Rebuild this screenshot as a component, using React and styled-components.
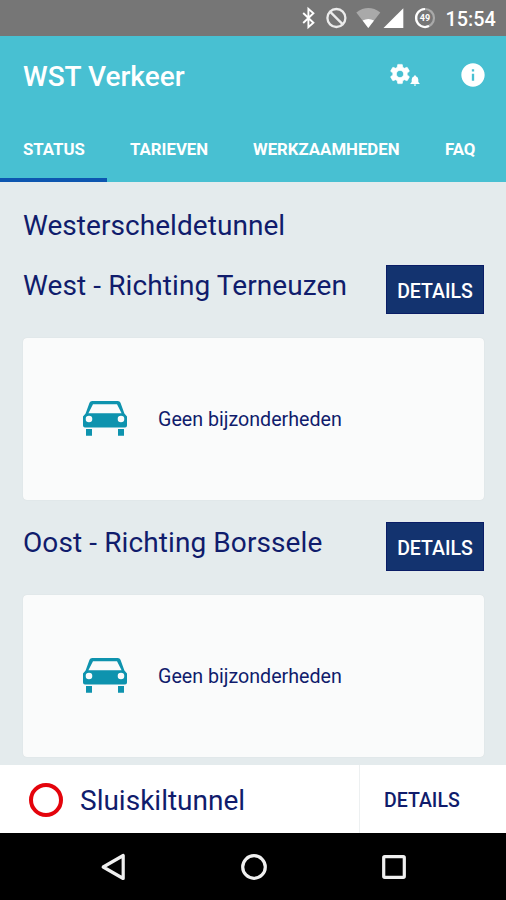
import React, { useState } from 'react'
import styled, { createGlobalStyle } from 'styled-components'
import { MdInfo, MdSettings } from 'react-icons/md'

const tabs = [
    { id: 1, title: 'STATUS', width: 107 },
    { id: 2, title: 'TARIEVEN', width: 123 },
    { id: 3, title: 'WERKZAAMHEDEN', width: 192 },
    { id: 4, title: 'FAQ', width: 84 },
]

const directions = [
    { id: 1, title: 'West - Richting Terneuzen', message: 'Geen bijzonderheden' },
    { id: 2, title: 'Oost - Richting Borssele', message: 'Geen bijzonderheden' },
]

function StatusIcons() {
    return (
        <svg width="136" height="36" viewBox="302 0 136 36">
            <path
                d="M303.2 13L313.4 22.8L308.4 27.2V8.8L313.4 13.2L303.2 23"
                fill="none"
                stroke="#fff"
                strokeWidth="1.9"
            />
            <g fill="none" stroke="#ececec" strokeWidth="2.3">
                <circle cx="336.4" cy="18" r="9" />
                <path d="M330 11.6L342.8 24.4" />
            </g>
            <path d="M356.3 12.4Q368.3 3.8 380.3 12.4L368.3 28Z" fill="#a9a9a9" />
            <path d="M362.6 20.6Q368.3 17.6 374 20.6L368.3 28Z" fill="#fff" />
            <path d="M403.3 8.3V28H383.5Z" fill="#fff" />
            <circle cx="425" cy="18" r="9" fill="none" stroke="#a9a9a9" strokeWidth="2.2" />
            <path d="M425 9A9 9 0 1 0 429 26.1" fill="none" stroke="#fff" strokeWidth="2.2" />
            <text x="425" y="21.4" fill="#fff" fontFamily="Roboto, sans-serif" fontSize="9" fontWeight="700" textAnchor="middle">49</text>
        </svg>
    )
}

function Bell() {
    return (
        <svg width="10" height="11" viewBox="0 0 10 11" fill="#fff">
            <path d="M5 0.2Q5.9 0.2 5.9 1.2Q8.3 2 8.3 4.6V7L9.6 8.4V9H0.4V8.4L1.7 7V4.6Q1.7 2 4.1 1.2Q4.1 0.2 5 0.2ZM3.8 9.5H6.2Q6.2 10.7 5 10.7Q3.8 10.7 3.8 9.5Z" />
        </svg>
    )
}

function Car() {
    return (
        <svg width="46" height="36" viewBox="0 0 46 36" fill="#0e93ae">
            <path
                fillRule="evenodd"
                d="M10.2 0H35.8Q37.8 0 38.5 1.8L42.4 12.4L45 15.5V24.5Q45 26.5 43 26.5H3Q1 26.5 1 24.5V15.5L3.6 12.4L7.5 1.8Q8.2 0 10.2 0ZM11 3.2L6.4 12.2H39.6L35 3.2ZM7 14.7A3.3 3.3 0 1 0 7 21.3A3.3 3.3 0 1 0 7 14.7ZM39 14.7A3.3 3.3 0 1 0 39 21.3A3.3 3.3 0 1 0 39 14.7Z"
            />
            <path d="M4 28H10V34.8H4ZM36 28H42V34.8H36Z" />
        </svg>
    )
}

function App() {
    const [active, setActive] = useState(1)

    return (
        <Screen>
            <GlobalStyle />
            <StatusBar>
                <StatusIcons />
                <Clock>15:54</Clock>
            </StatusBar>
            <Header>
                <Toolbar>
                    <Title>WST Verkeer</Title>
                    <Settings>
                        <MdSettings size={24} />
                        <Bell />
                    </Settings>
                    <MdInfo size={28} />
                </Toolbar>
                <Tabs>
                    {tabs.map((tab) => {
                        return <Tab
                            key={tab.id}
                            $active={active === tab.id}
                            $width={tab.width}
                            onClick={() => setActive(tab.id)}
                        >
                            {tab.title}
                        </Tab>
                    })}
                </Tabs>
            </Header>
            <Content>
                <Heading>Westerscheldetunnel</Heading>
                {directions.map((item) => {
                    return <Direction key={item.id}>
                        <DirectionHead>
                            <Heading $spacing="0.1px">{item.title}</Heading>
                            <DetailsButton>DETAILS</DetailsButton>
                        </DirectionHead>
                        <Card>
                            <Car />
                            <span>{item.message}</span>
                        </Card>
                    </Direction>
                })}
            </Content>
            <Footer>
                <FooterTitle>
                    <Ring />
                    <Heading>Sluiskiltunnel</Heading>
                </FooterTitle>
                <FooterDetails>DETAILS</FooterDetails>
            </Footer>
            <NavBar>
                <svg width="26" height="30" viewBox="0 0 26 30">
                    <path d="M3.2 15L23.2 3.5V26.5Z" />
                </svg>
                <svg width="28" height="28" viewBox="0 0 28 28">
                    <circle cx="14" cy="14" r="11.3" />
                </svg>
                <svg width="26" height="26" viewBox="0 0 26 26">
                    <rect x="2.7" y="2.7" width="20.6" height="20.6" rx="1" />
                </svg>
            </NavBar>
        </Screen>
    )
}

const GlobalStyle = createGlobalStyle`
  * {
    box-sizing: border-box;
  }

  body {
    margin: 0;
    font-family: 'Roboto', sans-serif;
  }

  svg {
    display: block;
    flex: none;
  }
`;

const Screen = styled.div`
  width: 506px;
  height: 900px;
  display: flex;
  flex-direction: column;
  overflow: hidden;
  background: #e4ebed;
  color: #101c6c;
  white-space: nowrap;
`;

const StatusBar = styled.div`
  height: 36px;
  flex: none;
  display: flex;
  align-items: center;
  justify-content: flex-end;
  gap: 8px;
  padding-right: 11px;
  background: #767676;
`;

const Clock = styled.span`
  width: 49px;
  padding-top: 3px;
  color: #fff;
  font-size: 19.8px;
  line-height: 33px;
  font-weight: 500;
  text-indent: -0.5px;
`;

const Header = styled.header`
  height: 146px;
  flex: none;
  background: #48c0d2;
  color: #fff;
`;

const Toolbar = styled.div`
  height: 80px;
  display: flex;
  align-items: center;
  padding: 0 19px 2px 23px;
`;

const Title = styled.h1`
  flex: 1;
  margin: 0;
  padding-top: 4px;
  font-size: 28px;
  line-height: 40px;
  font-weight: 500;
`;

const Settings = styled.div`
  display: flex;
  align-items: flex-end;
  width: 71px;
  padding-bottom: 2px;

  svg:first-child path:last-child {
    stroke: #fff;
    stroke-width: 0.6;
  }

  svg + svg {
    margin-left: -2px;
  }
`;

const Tabs = styled.nav`
  height: 66px;
  display: flex;
`;

const Tab = styled.button`
  width: ${(props) => props.$width}px;
  height: 66px;
  padding: 5px 0 0 23px;
  border: 0;
  border-bottom: 4px solid ${(props) => (props.$active ? '#0d56b0' : 'transparent')};
  background: none;
  color: inherit;
  font: 700 16.8px/57px 'Roboto', sans-serif;
  text-align: left;
`;

const Content = styled.main`
  flex: 1;
  min-height: 0;
  padding: 23px 22px 0 23px;
`;

const Heading = styled.h2`
  margin: 0;
  padding-top: 2px;
  font-size: 28px;
  line-height: 38px;
  font-weight: 400;
  letter-spacing: ${(props) => props.$spacing || '0.05px'};
`;

const Direction = styled.section`
  height: 257px;
  padding-top: 20px;
`;

const DirectionHead = styled.div`
  height: 73px;
  display: flex;
  align-items: flex-start;
  justify-content: space-between;
`;

const DetailsButton = styled.button`
  width: 98px;
  height: 49px;
  padding: 4px 0 0;
  border: 1px solid #0a1d66;
  background: #13336f;
  color: #fff;
  font: 500 19.5px/43px 'Roboto', sans-serif;
`;

const Card = styled.div`
  height: 162px;
  display: flex;
  align-items: center;
  gap: 30px;
  padding-left: 59px;
  border-radius: 4px;
  background: #fafbfb;
  box-shadow: 0 0 1px rgba(0, 0, 0, 0.12);
  font-size: 19.65px;
`;

const Footer = styled.footer`
  height: 68px;
  flex: none;
  display: flex;
  background: #fff;
`;

const FooterTitle = styled.div`
  width: 360px;
  display: flex;
  align-items: center;
  gap: 17px;
  padding-left: 29px;
  border-right: 1px solid #edf0f1;

  h2 {
    padding-top: 4px;
    letter-spacing: 0;
  }
`;

const Ring = styled.span`
  width: 34px;
  height: 34px;
  margin-top: 1px;
  border: 4px solid #e4040c;
  border-radius: 50%;
`;

const FooterDetails = styled.button`
  padding: 4px 0 0 24px;
  border: 0;
  background: none;
  color: inherit;
  font: 500 19.5px/64px 'Roboto', sans-serif;
`;

const NavBar = styled.div`
  height: 67px;
  flex: none;
  display: flex;
  align-items: center;
  justify-content: space-between;
  padding: 0 99px 0 100px;
  background: #000;

  svg {
    fill: none;
    stroke: #f0f0f0;
    stroke-width: 3.2;
    stroke-linejoin: round;
  }
`;

export default App
